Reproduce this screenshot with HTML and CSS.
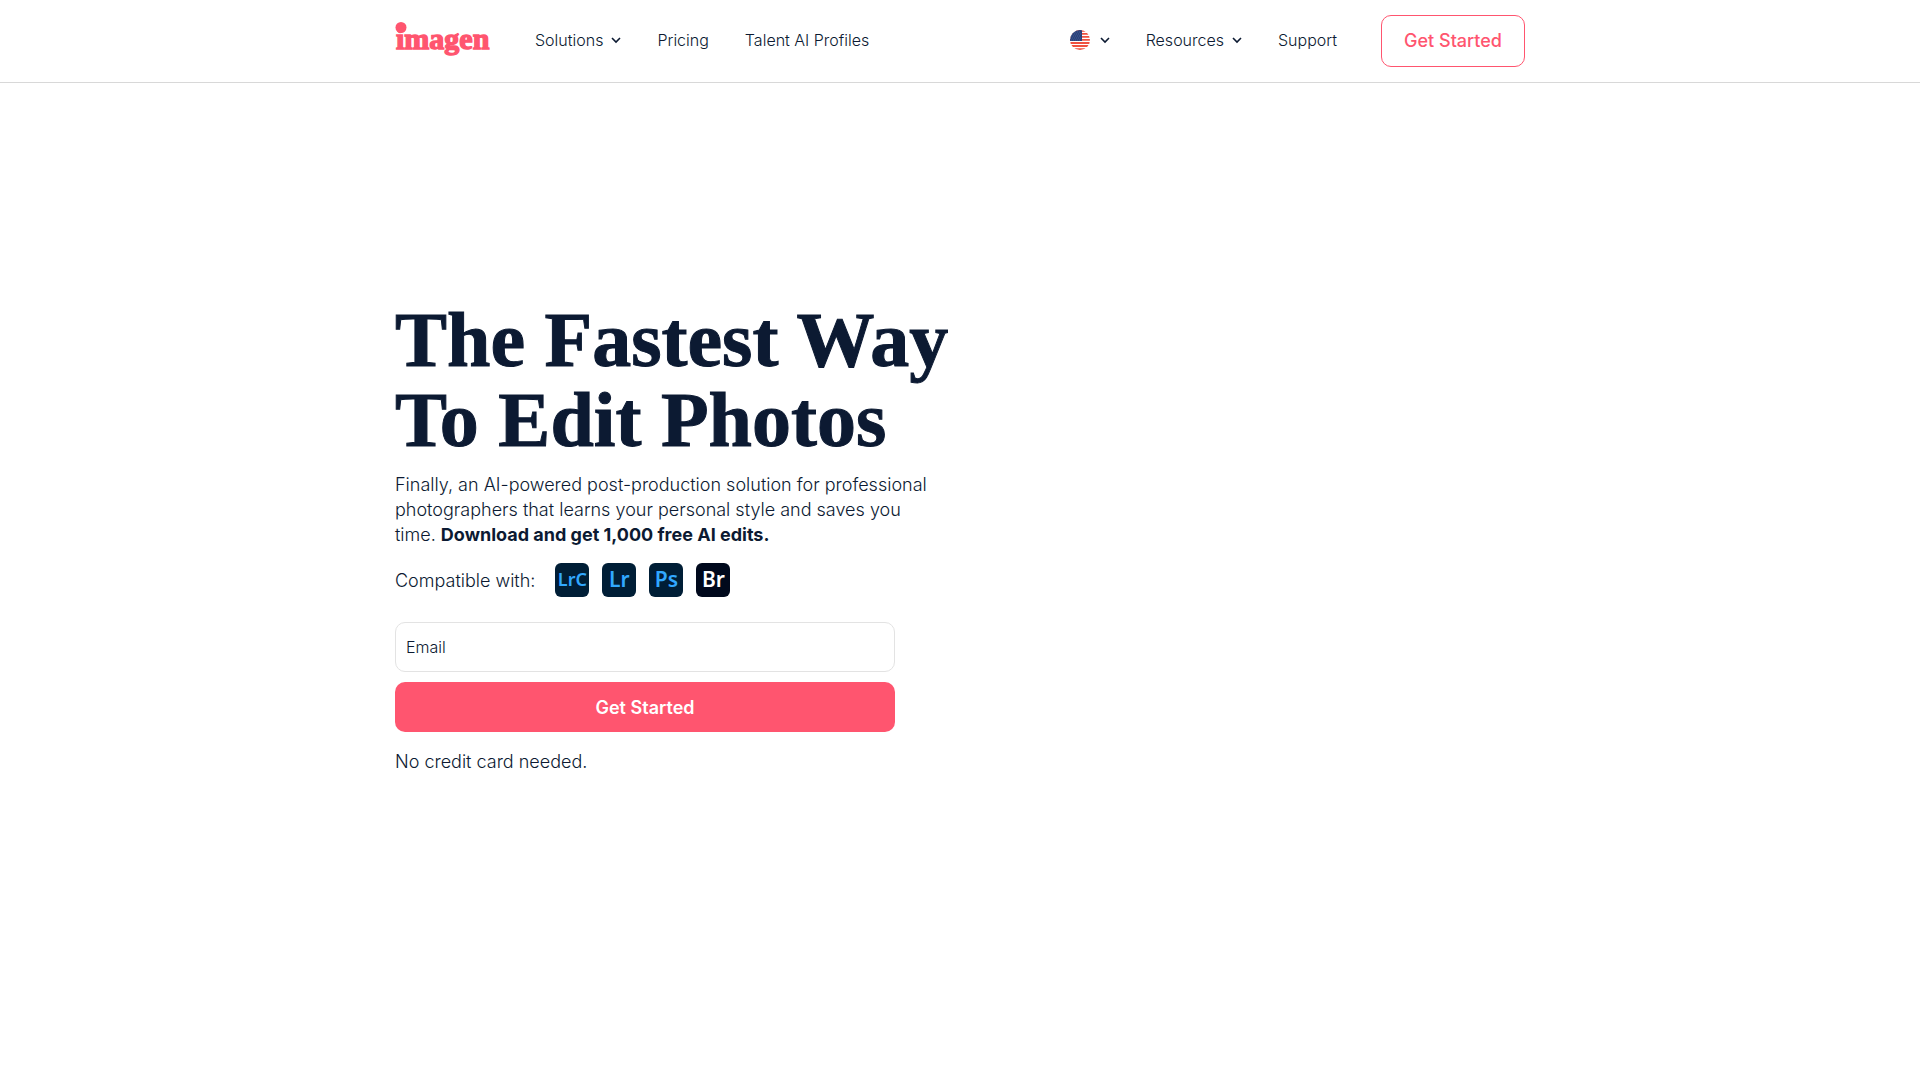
FILE: index.html
```
<!DOCTYPE html>
<html lang="en">
<head>
<meta charset="UTF-8" />
<meta name="viewport" content="width=device-width, initial-scale=1" />
<title>Imagen</title>
<link rel="stylesheet" href="styles.css">
</head>
<body>
<header class="header">
  <div class="container header-inner">
    <a class="logo" href="#" aria-label="imagen">
      <svg width="96" height="38" viewBox="0 0 96 38">
        <circle cx="6" cy="5.5" r="5.5"/>
        <text x="1" y="27">imagen</text>
      </svg>
    </a>
    <nav class="nav" aria-label="Main">
      <button class="nav-item" type="button">Solutions
        <svg class="chevron" viewBox="0 0 10 10" aria-hidden="true"><path d="M1 3l4 4 4-4"/></svg>
      </button>
      <a class="nav-item" href="#">Pricing</a>
      <a class="nav-item" href="#">Talent AI Profiles</a>
    </nav>
    <nav class="nav nav-right" aria-label="More">
      <button class="nav-item" type="button" aria-label="Language">
        <svg class="flag" viewBox="0 0 20 20" aria-hidden="true">
          <clipPath id="round"><circle cx="10" cy="10" r="10"/></clipPath>
          <g clip-path="url(#round)">
            <path fill="#fff" d="M0 0h20v20H0z"/>
            <path stroke="#f0503f" stroke-width="1.8" d="M0 .8h20M0 3.8h20M0 6.8h20M0 9.9h20M0 13h20M0 16h20M0 19.2h20"/>
            <path fill="#2b417b" d="M0 0h12v11H0z"/>
            <path stroke="#687aa6" stroke-width="0.7" stroke-dasharray="0.7 1.3" d="M1 2h10M2 4h9M1 6h10M2 8h9M1 10h10"/>
          </g>
        </svg>
        <svg class="chevron" viewBox="0 0 10 10" aria-hidden="true"><path d="M1 3l4 4 4-4"/></svg>
      </button>
      <button class="nav-item" type="button">Resources
        <svg class="chevron" viewBox="0 0 10 10" aria-hidden="true"><path d="M1 3l4 4 4-4"/></svg>
      </button>
      <a class="nav-item" href="#">Support</a>
    </nav>
    <a class="btn-outline" href="#">Get Started</a>
  </div>
</header>

<main class="container hero">
  <h1>The Fastest Way<br>To Edit Photos</h1>
  <p class="lead">Finally, an AI-powered post-production solution for professional<br>photographers that learns your personal style and saves you<br>time. <strong>Download and get 1,000 free AI edits.</strong></p>
  <div class="compatible">
    <span>Compatible with:</span>
    <ul class="apps">
      <li class="app app-narrow">LrC</li>
      <li class="app">Lr</li>
      <li class="app">Ps</li>
      <li class="app app-dark">Br</li>
    </ul>
  </div>
  <form class="signup">
    <div class="field">
      <label for="email">Email</label>
      <input id="email" type="email">
    </div>
    <button type="submit">Get Started</button>
  </form>
  <p class="note">No credit card needed.</p>
</main>
</body>
</html>
```
FILE: styles.css
```
* {
  box-sizing: border-box;
}
body {
  margin: 0;
  background: #fff;
  color: #0c1a32;
  font-family: Inter, "Liberation Sans", sans-serif;
  font-size: 18px;
  font-weight: 300;
  line-height: 25px;
}
a {
  color: inherit;
  text-decoration: none;
}
.container {
  width: 100%;
  max-width: 1170px;
  margin: 0 auto;
  padding: 0 20px;
}

.header {
  border-bottom: 1px solid #d8d8d8;
}
.header-inner {
  display: flex;
  align-items: center;
  padding-top: 15px;
  padding-bottom: 15px;
}
.logo {
  display: flex;
  margin-right: 44px;
}
.logo svg {
  fill: #ff556f;
  overflow: visible;
}
.logo text {
  font-family: "Liberation Serif", serif;
  font-size: 30px;
  font-weight: 700;
  stroke: #ff556f;
  stroke-width: 1.4px;
}
.nav {
  display: flex;
  gap: 36px;
  padding-bottom: 2px;
}
.nav-right {
  margin-left: auto;
}
.nav-item {
  display: flex;
  align-items: center;
  gap: 8px;
  padding: 0;
  border: none;
  background: none;
  color: inherit;
  font: inherit;
  font-size: 16px;
  cursor: pointer;
}
.chevron {
  width: 10px;
  height: 10px;
  fill: none;
  stroke: #0c1a32;
  stroke-width: 1.6;
}
.flag {
  width: 20px;
  height: 20px;
  margin-right: 2px;
}
.btn-outline {
  margin-left: 44px;
  padding: 12px 22px 13px;
  border: 1px solid #ff556f;
  border-radius: 10px;
  color: #ff556f;
  font-weight: 500;
}

.hero {
  padding-top: 217px;
  padding-bottom: 217px;
}
h1 {
  margin: 0;
  font-family: "Liberation Serif", serif;
  font-size: 78px;
  font-weight: 700;
  line-height: 80px;
  -webkit-text-stroke: 1px #0c1a32;
}
.lead {
  margin: 12px 0 16px;
}
.lead strong {
  font-weight: 700;
}
.compatible {
  display: flex;
  align-items: center;
  gap: 20px;
}
.apps {
  display: flex;
  gap: 13px;
  margin: 0;
  padding: 0;
  list-style: none;
}
.app {
  width: 34px;
  height: 34px;
  border-radius: 6px;
  background: #001e36;
  color: #31a8ff;
  font-family: "Noto Sans", sans-serif;
  font-size: 21px;
  font-weight: 600;
  line-height: 33px;
  text-align: center;
}
.app-narrow {
  font-size: 18px;
}
.app-dark {
  background: #00091c;
  color: #fff;
}

.signup {
  display: flex;
  flex-direction: column;
  gap: 10px;
  max-width: 500px;
  margin-top: 25px;
}
.field {
  display: flex;
  align-items: center;
  height: 50px;
  padding: 0 10px;
  border: 1px solid #e3e3e3;
  border-radius: 10px;
  font-size: 16px;
}
.field input {
  flex: 1;
  min-width: 0;
  margin-left: 10px;
  border: none;
  outline: none;
  background: none;
  color: inherit;
  font: inherit;
}
.signup button {
  height: 50px;
  border: none;
  border-radius: 10px;
  background: #ff556f;
  color: #fff;
  font: inherit;
  font-weight: 600;
  cursor: pointer;
}
.note {
  margin: 17px 0 0;
}
```
